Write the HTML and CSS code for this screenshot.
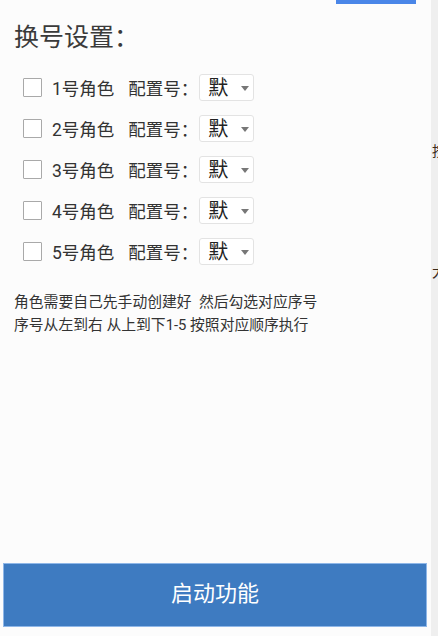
FILE: index.html
```html
<!DOCTYPE html>
<html lang="zh-CN">
<head>
<meta charset="utf-8">
<title>换号设置</title>
<link rel="stylesheet" href="styles.css">
</head>
<body>
<div class="screen">
  <main class="panel">
    <div class="topbar"></div>
    <h1 class="title">换号设置：</h1>
    <ul class="rows">
      <li class="row"><span class="check"></span><span class="role">1号角色</span><span class="cfg">配置号：</span><span class="select"><span class="val">默</span><span class="arrow"></span></span></li>
      <li class="row"><span class="check"></span><span class="role">2号角色</span><span class="cfg">配置号：</span><span class="select"><span class="val">默</span><span class="arrow"></span></span></li>
      <li class="row"><span class="check"></span><span class="role">3号角色</span><span class="cfg">配置号：</span><span class="select"><span class="val">默</span><span class="arrow"></span></span></li>
      <li class="row"><span class="check"></span><span class="role">4号角色</span><span class="cfg">配置号：</span><span class="select"><span class="val">默</span><span class="arrow"></span></span></li>
      <li class="row"><span class="check"></span><span class="role">5号角色</span><span class="cfg">配置号：</span><span class="select"><span class="val">默</span><span class="arrow"></span></span></li>
    </ul>
    <p class="note">角色需要自己先手动创建好&nbsp; 然后勾选对应序号<br>序号从左到右 从上到下1-5 按照对应顺序执行</p>
    <div class="spacer"></div>
    <button class="start">启动功能</button>
  </main>
  <aside class="side">
    <span class="peek peek1">按</span>
    <span class="peek peek2">大</span>
  </aside>
</div>
</body>
</html>
```
FILE: styles.css
```css
html, body {
  margin: 0;
  padding: 0;
  height: 100%;
}
body {
  font-family: Roboto, "Noto Sans CJK SC", sans-serif;
  color: #333;
  background: #fcfcfc;
}
.screen {
  display: flex;
  width: 438px;
  height: 636px;
}
.panel {
  width: 431px;
  display: flex;
  flex-direction: column;
  background: #fcfcfc;
}
.topbar {
  align-self: flex-end;
  width: 80px;
  height: 4px;
  margin-right: 15px;
  background: #4a86e8;
}
.title {
  margin: 19px 0 0 14px;
  font-size: 25px;
  line-height: 30px;
  font-weight: normal;
  color: #3a3a3a;
}
.rows {
  list-style: none;
  margin: 14.5px 0 0 0;
  padding: 0;
}
.row {
  display: flex;
  align-items: center;
  height: 40.9px;
  padding-left: 23px;
  font-size: 17.5px;
  color: #333;
}
.check {
  width: 17px;
  height: 17px;
  border: 1.5px solid #a9a9a9;
  border-radius: 1px;
  background: #fff;
  margin-right: 10px;
}
.role {
  margin-right: 13.8px;
}
.select {
  display: flex;
  align-items: center;
  box-sizing: border-box;
  width: 55px;
  height: 27px;
  margin-left: 1px;
  padding-left: 8px;
  border: 1px solid #e3e3e3;
  border-radius: 3px;
  background: #fff;
}
.val {
  font-size: 20px;
  line-height: 24px;
  color: #222;
}
.arrow {
  margin-left: 13px;
  margin-top: 2px;
  width: 0;
  height: 0;
  border-left: 4px solid transparent;
  border-right: 4px solid transparent;
  border-top: 5px solid #777;
}
.note {
  margin: 19px 0 0 14px;
  font-size: 14.8px;
  line-height: 23px;
  color: #333;
}
.spacer {
  flex: 1;
}
.start {
  margin: 0 4px 9px 3px;
  height: 64px;
  border: 1px solid #8fb7e8;
  background: #3e7bc1;
  color: #fff;
  font-family: Roboto, "Noto Sans CJK SC", sans-serif;
  font-size: 22px;
  line-height: 26px;
  padding: 0 0 3px 0;
}
.side {
  width: 7px;
  background: #efefef;
  overflow: hidden;
  display: flex;
  flex-direction: column;
}
.peek {
  display: block;
  font-size: 14px;
  line-height: 14px;
  color: #3a2a1a;
  padding-left: 1px;
  white-space: nowrap;
}
.peek1 {
  margin-top: 144px;
}
.peek2 {
  margin-top: 107px;
}
```
